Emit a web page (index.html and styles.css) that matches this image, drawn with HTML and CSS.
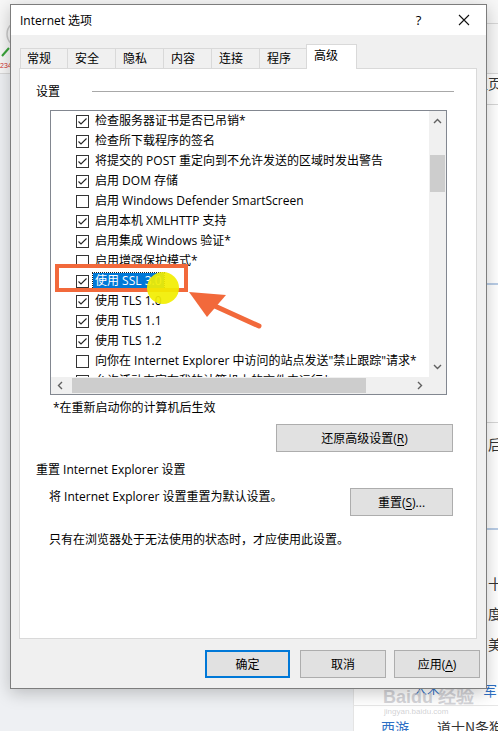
FILE: index.html
```html
<!DOCTYPE html>
<html lang="zh-CN">
<head>
<meta charset="utf-8">
<title>Internet 选项</title>
<link rel="stylesheet" href="styles.css">
</head>
<body>
<div class="desk">
  <div class="bg-header"></div>
  <div class="bg-right"></div>
  <div class="bg-line l1"></div>
  <div class="bg-line l2"></div>
  <div class="bg-line l3 blue"></div>
  <div class="bg-line l4"></div>
  <div class="bg-line l5 blue"></div>
  <div class="bg-line l6"></div>
  <span class="frag f-home">主页</span>
  <span class="frag f-hou">后</span>
  <span class="frag f-shi">十</span>
  <span class="frag f-du">度</span>
  <span class="frag f-mei">美</span>
  <span class="frag f-jun">军</span>
  <span class="frag f-song">大宋</span>
  <span class="frag f-xy">西游</span>
  <span class="frag f-ds">道士N条狗</span>
  <span class="frag f-wm">Baidu 经验</span>
  <span class="frag f-wm2">jingyan.baidu.com</span>
  <span class="frag f-num">234</span>
  <svg class="bg-icon" width="20" height="40" viewBox="0 0 20 40"><circle cx="20" cy="14" r="13" fill="none" stroke="#c8c8c8" stroke-width="1.5"/><path d="M2 36 L9 28" stroke="#3aa33a" stroke-width="2"/></svg>

  <div class="dialog">
    <div class="titlebar">
      <span class="title">Internet 选项</span>
      <span class="tb-btn">?</span>
      <span class="tb-btn">
        <svg width="12" height="12" viewBox="0 0 12 12"><path d="M1 1 L11 11 M11 1 L1 11" stroke="#111" stroke-width="1.1"/></svg>
      </span>
    </div>
    <div class="body">
      <div class="tabs">
        <span class="tab">常规</span>
        <span class="tab">安全</span>
        <span class="tab">隐私</span>
        <span class="tab">内容</span>
        <span class="tab">连接</span>
        <span class="tab">程序</span>
        <span class="tab active">高级</span>
      </div>
      <div class="panel">
        <div class="group-head"><span>设置</span><span class="rule"></span></div>
        <div class="listbox">
          <div class="rows">
            <div class="row"><span class="cb on"></span><span class="lbl">检查服务器证书是否已吊销*</span></div>
            <div class="row"><span class="cb on"></span><span class="lbl">检查所下载程序的签名</span></div>
            <div class="row"><span class="cb on"></span><span class="lbl">将提交的 POST 重定向到不允许发送的区域时发出警告</span></div>
            <div class="row"><span class="cb on"></span><span class="lbl">启用 DOM 存储</span></div>
            <div class="row"><span class="cb"></span><span class="lbl">启用 Windows Defender SmartScreen</span></div>
            <div class="row"><span class="cb on"></span><span class="lbl">启用本机 XMLHTTP 支持</span></div>
            <div class="row"><span class="cb on"></span><span class="lbl">启用集成 Windows 验证*</span></div>
            <div class="row"><span class="cb"></span><span class="lbl">启用增强保护模式*</span></div>
            <div class="row"><span class="cb on"></span><span class="lbl sel">使用 SSL 3.0</span></div>
            <div class="row"><span class="cb on"></span><span class="lbl">使用 TLS 1.0</span></div>
            <div class="row"><span class="cb on"></span><span class="lbl">使用 TLS 1.1</span></div>
            <div class="row"><span class="cb on"></span><span class="lbl">使用 TLS 1.2</span></div>
            <div class="row"><span class="cb"></span><span class="lbl">向你在 Internet Explorer 中访问的站点发送"禁止跟踪"请求*</span></div>
            <div class="row"><span class="cb"></span><span class="lbl">允许活动内容在我的计算机上的文件中运行*</span></div>
          </div>
          <div class="vscroll">
            <svg class="chev" width="9" height="6" viewBox="0 0 9 6"><path d="M1 5 L4.5 1.5 L8 5" fill="none" stroke="#606060" stroke-width="1.4"/></svg>
            <div class="vtrack"><div class="vthumb"></div></div>
            <svg class="chev" width="9" height="6" viewBox="0 0 9 6"><path d="M1 1 L4.5 4.5 L8 1" fill="none" stroke="#606060" stroke-width="1.4"/></svg>
          </div>
          <div class="hscroll">
            <svg class="chev" width="6" height="9" viewBox="0 0 6 9"><path d="M5 1 L1.5 4.5 L5 8" fill="none" stroke="#606060" stroke-width="1.4"/></svg>
            <div class="htrack"><div class="hthumb"></div></div>
            <svg class="chev" width="6" height="9" viewBox="0 0 6 9"><path d="M1 1 L4.5 4.5 L1 8" fill="none" stroke="#606060" stroke-width="1.4"/></svg>
          </div>
          <div class="corner"></div>
        </div>
        <div class="note">*在重新启动你的计算机后生效</div>
        <div class="btn-row"><span class="btn wide">还原高级设置(<u>R</u>)</span></div>
        <div class="sec-head">重置 Internet Explorer 设置</div>
        <div class="reset-row">
          <span class="reset-text">将 Internet Explorer 设置重置为默认设置。</span>
          <span class="btn reset">重置(<u>S</u>)...</span>
        </div>
        <div class="hint">只有在浏览器处于无法使用的状态时，才应使用此设置。</div>
      </div>
      <div class="footer">
        <span class="btn foot default">确定</span>
        <span class="btn foot">取消</span>
        <span class="btn foot">应用(<u>A</u>)</span>
      </div>
    </div>
  </div>

  <svg class="annot" width="498" height="731" viewBox="0 0 498 731">
    <rect x="57" y="266" width="129" height="24" fill="none" stroke="#f2693b" stroke-width="4"/>
    <circle cx="163" cy="288" r="16" fill="#f2ee00" opacity="0.92"/>
    <path d="M259 326 L206 302" stroke="#f2693b" stroke-width="5" stroke-linecap="round"/>
    <path d="M189 292 L226 295 L207 317 Z" fill="#f2693b"/>
  </svg>
</div>
</body>
</html>
```
FILE: styles.css
```css
* { box-sizing: border-box; }
html, body { margin: 0; padding: 0; }
body {
  font-family: "Open Sans", "Noto Sans CJK SC", sans-serif;
  font-size: 12px;
  color: #000;
}
.desk {
  position: relative;
  width: 498px;
  height: 731px;
  overflow: hidden;
  background: #eef0f3;
}
.bg-header {
  position: absolute; left: 0; top: 0; width: 498px; height: 74px;
  background: #f7f7f7; border-bottom: 1px solid #d8d8d8;
}
.bg-right {
  position: absolute; left: 353px; top: 74px; right: 0; bottom: 0;
  background: #fff; border-left: 1px solid #e4e4e4;
}
.bg-line { position: absolute; left: 480px; width: 18px; height: 1px; background: #d6d6d6; }
.bg-line.blue { background: #b9cde6; height: 2px; }
.l1 { top: 23px; } .l2 { top: 104px; } .l3 { top: 283px; } .l4 { top: 422px; } .l5 { top: 528px; } .l6 { top: 705px; left: 353px; width: 145px; background: #e6e6e6; }
.frag { position: absolute; font-family: "Noto Sans CJK SC", sans-serif; font-size: 14px; line-height: 16px; color: #333; white-space: nowrap; }
.f-home { left: 474px; top: 75px; }
.f-hou { left: 488px; top: 436px; }
.f-shi { left: 488px; top: 575px; }
.f-du { left: 488px; top: 605px; }
.f-mei { left: 488px; top: 636px; }
.f-jun { left: 483px; top: 682px; color: #2d6fc4; }
.f-song { left: 414px; top: 680px; color: #2d6fc4; font-size: 13px; }
.f-xy { left: 381px; top: 719px; color: #2d6fc4; }
.f-ds { left: 437px; top: 719px; }
.f-wm { left: 383px; top: 688px; font-size: 18px; line-height: 18px; font-weight: bold; color: rgba(200,200,205,0.75); font-family: "Liberation Sans", sans-serif; }
.f-wm2 { left: 384px; top: 707px; font-size: 8px; line-height: 9px; color: rgba(190,190,195,0.7); font-family: "Liberation Sans", sans-serif; }
.f-num { left: 0; top: 62px; font-size: 7px; line-height: 8px; color: #d03030; font-family: "Liberation Sans", sans-serif; }
.bg-icon { position: absolute; left: 0; top: 20px; }

.dialog {
  position: absolute; left: 10px; top: 4px;
  width: 477px; height: 685px;
  border: 1px solid #7d7d7d;
  background: #f0f0f0;
  box-shadow: 0 4px 16px rgba(0,0,0,0.22);
  display: flex; flex-direction: column;
}
.titlebar {
  height: 30px; background: #fff;
  display: flex; align-items: center;
  padding-left: 9px;
}
.title { flex: 1; font-size: 12px; }
.tb-btn {
  width: 45px; height: 30px;
  display: flex; align-items: center; justify-content: center;
  font-size: 13px;
}
.body {
  flex: 1;
  display: flex; flex-direction: column;
  padding: 9px 9px 0 8px;
}
.tabs {
  height: 24px;
  display: flex; align-items: flex-end;
  padding-left: 0;
}
.tab {
  width: 49px; height: 20px;
  border: 1px solid #d9d9d9; border-bottom: none;
  margin-right: -1px;
  padding-left: 7px;
  line-height: 19px;
  background: #f0f0f0;
}
.tab:first-child { width: 48px; margin-left: 1px; padding-left: 6px; }
.tab.active {
  width: 51px; height: 25px;
  margin-bottom: -1px;
  margin-left: -1px;
  background: #fff;
  line-height: 22px;
  padding-left: 7px;
  position: relative; z-index: 1;
}
.panel {
  height: 571px;
  background: #fff;
  border: 1px solid #d9d9d9;
  display: flex; flex-direction: column;
}
.group-head {
  margin-top: 12px; height: 20px;
  display: flex; align-items: center;
  padding-left: 16px; padding-right: 22px;
}
.rule { flex: 1; height: 1px; background: #a8a8a8; margin-left: 32px; }
.listbox {
  margin: 9px 0 0 30px;
  width: 397px; height: 285px;
  border: 1px solid #828790;
  display: grid;
  grid-template-columns: 1fr 17px;
  grid-template-rows: 1fr 17px;
  overflow: hidden;
}
.rows { overflow: hidden; }
.row {
  height: 20px;
  display: flex; align-items: center;
  padding-left: 25px;
  white-space: nowrap;
}
.cb {
  width: 13px; height: 13px; flex: none;
  border: 1px solid #333;
  margin-right: 4px;
  background: #fff;
  background-repeat: no-repeat;
}
.cb.on {
  background-image: url("data:image/svg+xml;utf8,<svg xmlns='http://www.w3.org/2000/svg' width='11' height='11' viewBox='0 0 11 11'><path d='M1.5 5.5 L4 8 L9.5 2.5' fill='none' stroke='%23222' stroke-width='1.1'/></svg>");
}
.lbl { padding: 0 2px; line-height: 16px; }
.lbl.sel {
  background: #0078d7; color: #fff;
  outline: 1px dotted #222;
}
.vscroll {
  background: #f0f0f0;
  display: flex; flex-direction: column; align-items: center;
}
.vscroll .chev { margin: 7px 0; }
.vtrack { flex: 1; width: 100%; padding: 0 1px; }
.vthumb { margin-top: 24px; height: 37px; background: #cdcdcd; }
.hscroll {
  background: #f0f0f0;
  display: flex; align-items: center;
  padding: 0 6px;
}
.htrack { flex: 1; height: 100%; padding: 1px 6px 1px 9px; }
.hthumb { width: 294px; height: 100%; background: #cdcdcd; }
.corner { background: #f0f0f0; }
.note { margin: 5px 0 0 33px; line-height: 16px; }
.btn-row { display: flex; justify-content: flex-end; padding-right: 23px; margin-top: 8px; }
.btn {
  height: 28px;
  display: flex; align-items: center; justify-content: center;
  background: #e1e1e1;
  border: 1px solid #adadad;
}
.btn.wide { width: 177px; }
.sec-head { margin: 10px 0 0 16px; line-height: 16px; }
.reset-row {
  margin-top: 10px;
  display: flex; align-items: flex-start;
  padding: 0 23px 0 29px;
}
.reset-text { flex: 1; line-height: 16px; margin-top: 1px; }
.btn.reset { width: 103px; }
.hint { margin: 16px 0 0 29px; line-height: 16px; }
.footer {
  margin-top: 11px;
  margin-right: -3px;
  display: flex; justify-content: flex-end;
  gap: 0;
}
.btn.foot { width: 86px; margin-left: 8px; }
.btn.default { width: 85px; border: 2px solid #0078d7; margin-left: 0; margin-right: 2px; }
u { text-decoration: underline; text-underline-offset: 2px; }
.annot { position: absolute; left: 0; top: 0; pointer-events: none; }
```
